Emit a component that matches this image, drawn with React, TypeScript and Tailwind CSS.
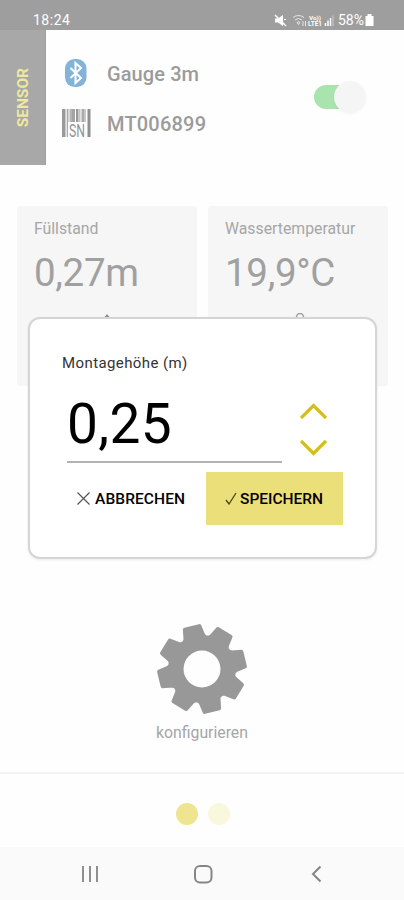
import type { ReactNode } from 'react';

const BARS = [
  { x: 0, w: 3, fill: '#999' },
  { x: 3, w: 1.5, fill: '#ccc' },
  { x: 5, w: 1.5, fill: '#aaa' },
  { x: 7.5, w: 2.5, fill: '#b4b4b4' },
  { x: 10, w: 3, fill: '#a4a4a4' },
  { x: 14, w: 2.5, fill: '#999' },
  { x: 16.5, w: 2, fill: '#c4c4c4' },
  { x: 19.5, w: 2.5, fill: '#aaa' },
  { x: 22, w: 2, fill: '#c8c8c8' },
  { x: 25.5, w: 3, fill: '#8f8f8f' },
];

// Outline of an eight-toothed cog centred on 0,0
function cogPath() {
  const points: string[] = [];
  const at = (deg: number, r: number) => {
    const a = (deg * Math.PI) / 180;
    points.push(`${(Math.cos(a) * r).toFixed(2)} ${(Math.sin(a) * r).toFixed(2)}`);
  };
  for (let i = 0; i < 8; i++) {
    const c = -103.5 + i * 45;
    at(c - 19, 32);
    at(c - 15.5, 34);
    at(c - 10, 43);
    at(c + 10, 43);
    at(c + 15.5, 34);
    at(c + 19, 32);
  }
  return `M${points.join('L')}Z`;
}

function StatusBar() {
  return (
    <div className="flex h-[30px] items-end justify-between bg-[#9e9e9e] pr-[30px] pl-[33px] text-[14px] leading-[20px] text-white">
      <span className="tracking-[0.5px]">18:24</span>
      <div className="flex items-center">
        <svg width="13" height="13" viewBox="0 0 13 13" className="mr-[5px]">
          <path d="M1 4.500h3L9 1v11L4 8.500H1Z" fill="#fff" />
          <path d="M1 1l11 11" stroke="#fff" strokeWidth="1.500" />
          <path d="M10 5.500h2" stroke="#fff" />
        </svg>
        <svg width="42" height="13" viewBox="0 0 42 13" className="mr-[4px] overflow-visible">
          <g fill="none" stroke="#fff" strokeOpacity="0.75">
            <path d="M1 3.500q5.500-4 11 0M3 6q3.500-3 7 0M5 8.500q1.500-1.500 3 0l-1.500 2Z" />
            <path d="M11 7v5M13.500 7v5" />
          </g>
          <text x="17" y="5.500" fontSize="6" fontWeight="700" fill="#fff" textLength="12" lengthAdjust="spacingAndGlyphs">Vo))</text>
          <text x="16" y="12" fontSize="6.500" fontWeight="700" fill="#fff" textLength="14" lengthAdjust="spacingAndGlyphs">LTE1</text>
          <path d="M33.500 12V9M36 12V6.500M38.500 12V4" stroke="#fff" strokeWidth="1.500" />
          <path d="M41 12V1.500" stroke="#fff" strokeOpacity="0.5" />
        </svg>
        <span>58%</span>
        <svg width="9" height="12" viewBox="0 0 9 12" className="ml-px">
          <path d="M2.500 0h4v2H8.500v10H.5V2h2Z" fill="#fff" />
        </svg>
      </div>
    </div>
  );
}

function Header() {
  return (
    <header className="flex h-[135px]">
      <div className="flex w-[46px] items-center justify-center border-r border-[#a0a0a0] bg-[#a8a8a8]">
        <span className="w-[20px] rotate-180 text-[15.500px] leading-[20px] font-bold text-[#efe9a0] [writing-mode:vertical-rl]">
          SENSOR
        </span>
      </div>
      <div className="flex flex-1 flex-col pt-[26px] pl-[16px]">
        <div className="flex h-[34px] items-center">
          <svg width="22" height="30" viewBox="0 0 22 30" className="mr-[20px] ml-[3px]">
            <rect y="1" width="21.500" height="28" rx="9.500" fill="#83b4d8" />
            <path d="M5.500 10l10.500 10-5.500 5V5l5.500 5L5.500 20" fill="none" stroke="#fff" strokeWidth="2" />
          </svg>
          <span className="pt-px text-[20px] font-medium tracking-[0.1px] text-[#9b9b9b]">Gauge 3m</span>
        </div>
        <div className="mt-[16px] flex h-[34px] items-center">
          <svg width="29" height="29" viewBox="0 0 29 29" className="mr-[16px] overflow-visible">
            {BARS.map((bar) => (
              <rect key={bar.x} x={bar.x} width={bar.w} height="28" fill={bar.fill} />
            ))}
            <rect x="6" y="13" width="18.500" height="16" fill="#fff" />
            <text x="7" y="27.500" fontSize="17.500" fill="#949494" textLength="16" lengthAdjust="spacingAndGlyphs">SN</text>
          </svg>
          <span className="pt-px text-[20px] font-medium tracking-[0.2px] text-[#9b9b9b]">MT006899</span>
        </div>
      </div>
      <div className="mt-[51px] mr-[36px] flex h-[32px] w-[54px] items-center">
        <div className="flex h-[24px] w-[40px] items-center rounded-full bg-[#a9e3ad] pl-[20px]">
          <div className="size-[32px] shrink-0 rounded-full bg-[#f5f5f5] shadow-[0_1px_3px_rgba(0,0,0,0.04)]" />
        </div>
      </div>
    </header>
  );
}

function ValueCard({ label, value, children }: { label: string; value: string; children: ReactNode }) {
  return (
    <div className="h-[180px] w-[180px] rounded-[3px] bg-[#f6f6f6] pt-[12px] pl-[17px]">
      <p className="text-[15.800px] leading-[22px] whitespace-nowrap text-[#a6a6a6]">{label}</p>
      <p className="mt-[10px] text-[38.500px] leading-[46px] tracking-[-0.300px] text-[#a0a0a0]">{value}</p>
      {children}
    </div>
  );
}

function Dialog() {
  return (
    <div className="absolute top-[317px] left-[28px] h-[242px] w-[349px] rounded-[12px] border-2 border-[#d5d5d5] bg-white pt-[34px] pl-[32px] shadow-[0_1px_3px_rgba(0,0,0,0.08)]">
      <p className="text-[15px] leading-[20px] tracking-[0.400px] text-[#333]">Montagehöhe (m)</p>
      <div className="mt-[7px] flex">
        <div className="ml-[5px] h-[83px] w-[215px] border-b-2 border-[#b3b3b3] pt-[12px] text-[55px] leading-[64px] tracking-[0.400px] text-black">
          0,25
        </div>
        <div className="mt-[22px] ml-[18px] flex flex-col gap-[20px]">
          <svg width="27" height="17" viewBox="0 0 27 17">
            <path d="M1 16L13.500 3.500L26 16" fill="none" stroke="#d4bd1c" strokeWidth="3.300" />
          </svg>
          <svg width="27" height="17" viewBox="0 0 27 17">
            <path d="M1 2L13.500 14.500L26 2" fill="none" stroke="#d4bd1c" strokeWidth="3.300" />
          </svg>
        </div>
      </div>
      <div className="mt-[9px] flex text-[15.500px] font-medium text-black">
        <button className="flex h-[53px] w-[144px] items-center pl-[15px]">
          <svg width="13" height="13" viewBox="0 0 13 13" className="mr-[5px]">
            <path d="M.5.5l12 12M12.500.5L.5 12.500" stroke="#555" strokeWidth="1.200" />
          </svg>
          <span className="pt-[2px] tracking-[0.1px]">ABBRECHEN</span>
        </button>
        <button className="flex h-[53px] w-[137px] items-center bg-[#ebdf7a] pl-[19px]">
          <svg width="12" height="13" viewBox="0 0 12 13" className="mr-[3px]">
            <path d="M1 8l3 4L11 1" fill="none" stroke="#4a4520" strokeWidth="1.300" />
          </svg>
          <span className="pt-[2px]">SPEICHERN</span>
        </button>
      </div>
    </div>
  );
}

export default function App() {
  return (
    <div className="relative flex h-[900px] w-[404px] flex-col overflow-hidden bg-[#fefefe] font-[Roboto,sans-serif]">
      <StatusBar />
      <Header />

      <div className="mt-[41px] flex gap-[11px] pl-[17px]">
        <ValueCard label="Füllstand" value="0,27m">
          <svg width="10" height="8" viewBox="0 0 10 8" className="mt-[18px] ml-[68px]">
            <path d="M5 0L9 5H1Z" fill="#8f8f8f" />
          </svg>
        </ValueCard>
        <ValueCard label="Wassertemperatur" value="19,9°C">
          <svg width="10" height="12" viewBox="0 0 10 12" className="mt-[17px] ml-[70px]">
            <path d="M1.500 12V4a3.500 3.500 0 0 1 7 0v8" fill="none" stroke="#a0a0a0" strokeWidth="1.500" />
          </svg>
        </ValueCard>
      </div>

      <div className="mt-[237px] flex flex-col items-center">
        <svg width="92" height="92" viewBox="-46 -46 92 92">
          <path d={cogPath()} fill="#989898" stroke="#989898" strokeWidth="4" strokeLinejoin="round" />
          <circle r="18.500" fill="#fefefe" />
        </svg>
        <span className="mt-[7px] text-[15.800px] leading-[22px] text-[#a6a6a6]">konfigurieren</span>
      </div>

      <div className="mt-auto flex h-[75px] items-center justify-center gap-[10px] border-t-2 border-[#f3f3f3] pt-[7px] pl-px">
        <span className="size-[22px] rounded-full bg-[#efe48f]" />
        <span className="size-[22px] rounded-full bg-[#f9f8dc]" />
      </div>

      {/* Android navigation */}
      <nav className="flex h-[53px] bg-[#fafafa] pt-[18px] pl-[81px]">
        <svg width="18" height="18" viewBox="0 0 18 18">
          <path d="M2 1v16M9 1v16M16 1v16" stroke="#8f8f8f" strokeWidth="2" />
        </svg>
        <svg width="20" height="20" viewBox="0 0 20 20" className="ml-[94px]">
          <rect x="2" y="1" width="16.500" height="16.500" rx="5" fill="none" stroke="#858585" strokeWidth="2" />
        </svg>
        <svg width="12" height="18" viewBox="0 0 12 18" className="ml-[97px]">
          <path d="M10.500 1.500L3 9l7.500 7.500" fill="none" stroke="#858585" strokeWidth="2" />
        </svg>
      </nav>

      <Dialog />
    </div>
  );
}
